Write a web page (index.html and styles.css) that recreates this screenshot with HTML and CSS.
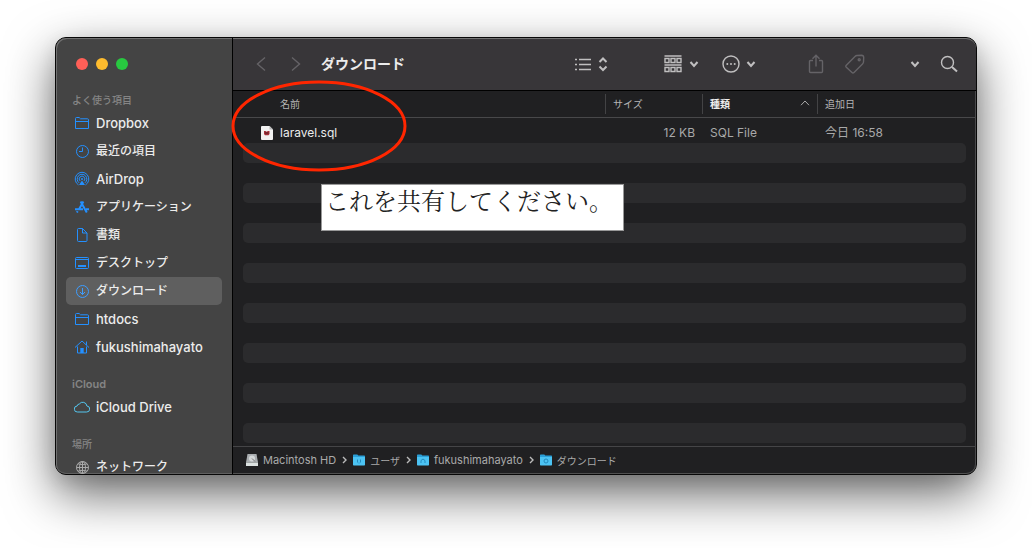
FILE: index.html
```html
<!DOCTYPE html>
<html lang="ja">
<head>
<meta charset="utf-8">
<meta name="viewport" content="width=device-width, initial-scale=1">
<title>ダウンロード</title>
<link rel="stylesheet" href="styles.css">
</head>
<body>
<svg class="sprite" aria-hidden="true">
  <symbol id="folder" viewBox="0 0 16 16"><path d="M1.500 13.500V3.500q0-1 1-1h2.700l1.300 1.300h7q1 0 1 1v8.700zM1.500 6.500h13"/></symbol>
  <symbol id="mini-folder" viewBox="0 0 12 12"><path d="M0 1.200Q0 .5.700.5h3.600l1 1h6q.7 0 .7.7V5H0z" fill="#2a9fd8"/><path d="M0 3h12v7.800q0 .7-.7.7H.7q-.7 0-.7-.7z" fill="#4cc3f3"/></symbol>
  <symbol id="down" viewBox="0 0 10 10"><path d="M1.500 3 5 7l3.500-4"/></symbol>
</svg>
<main class="window">
  <aside class="sidebar">
    <div class="lights">
      <button class="light close" aria-label="閉じる"></button>
      <button class="light minimize" aria-label="しまう"></button>
      <button class="light expand" aria-label="拡大"></button>
    </div>
    <nav class="places">
      <h2 class="group">よく使う項目</h2>
      <a class="place" href="#"><svg class="icon"><use href="#folder"/></svg><span class="latin">Dropbox</span></a>
      <a class="place" href="#"><svg class="icon" viewBox="0 0 16 16"><circle cx="8.500" cy="8.500" r="6"/><path d="M8.500 4.500v4h-3.500"/></svg>最近の項目</a>
      <a class="place" href="#"><svg class="icon" viewBox="0 0 16 16"><path d="M4.500 13.900a6.800 6.800 0 1 1 7 0M5 11.800a4.800 4.800 0 1 1 6 0M6 9.900a2.800 2.800 0 1 1 4 0"/><circle class="solid" cx="8" cy="8" r="1"/><path class="solid" d="m8 9.500 3 4.500H5z"/></svg><span class="latin">AirDrop</span></a>
      <a class="place" href="#"><svg class="icon" viewBox="0 0 16 16"><path class="bold" d="M6.600 2.500 12.800 13.500M9.400 2.500 5 10.300M1 10.300h8M12 10.300h3M3.700 12.200l-.8 1.400"/></svg>アプリケーション</a>
      <a class="place" href="#"><svg class="icon" viewBox="0 0 16 16"><path d="M4.500 1.500h4l4.500 4.500v7.500q0 1-1 1H4.500q-1 0-1-1v-11q0-1 1-1zM8.500 1.500v4.500h4.500"/></svg>書類</a>
      <a class="place" href="#"><svg class="icon" viewBox="0 0 16 16"><rect x="1.500" y="2.500" width="13" height="11" rx="1"/><path d="M1.500 4.500h13"/><path class="bold" d="M4 11h8"/></svg>デスクトップ</a>
      <a class="place selected" href="#" aria-current="page"><svg class="icon" viewBox="0 0 16 16"><circle cx="8.500" cy="8.500" r="6"/><path d="M8.500 5v6.500M6 9l2.500 2.500 2.500-2.500"/></svg>ダウンロード</a>
      <a class="place" href="#"><svg class="icon"><use href="#folder"/></svg><span class="latin">htdocs</span></a>
      <a class="place" href="#"><svg class="icon" viewBox="0 0 16 16"><path d="M1 8.500 8 2l7 6.500M12.500 6V2.500M3.500 7.500v6.500h9V7.500"/><path class="solid" d="M6.300 14V9h3.400v5z"/></svg><span class="latin">fukushimahayato</span></a>
      <h2 class="group later"><span>iCloud</span></h2>
      <a class="place" href="#"><svg class="icon cloud" viewBox="0 0 16 16"><path d="M3.500 13a3 3 0 0 1-.4-6A2.400 2.400 0 0 1 5.300 5a4.200 4.200 0 0 1 7.600 2 3 3 0 0 1-.4 6z"/></svg><span class="latin">iCloud Drive</span></a>
      <h2 class="group later">場所</h2>
      <a class="place" href="#"><svg class="icon globe" viewBox="0 0 16 16"><circle cx="8.500" cy="8.500" r="6"/><ellipse cx="8.500" cy="8.500" rx="3" ry="6"/><path d="M8.500 2.500v12M2.500 8.500h12M4 4.800q4.500 2 9 0M4 12.200q4.500-2 9 0"/></svg>ネットワーク</a>
    </nav>
  </aside>
  <section class="content">
    <header class="toolbar">
      <div class="history">
        <button class="tool dim" aria-label="戻る"><svg width="12" height="16" viewBox="0 0 12 16"><path d="M10 1.500 2.500 8l7.500 6.500"/></svg></button>
        <button class="tool dim" aria-label="進む"><svg width="12" height="16" viewBox="0 0 12 16"><path d="M2 1.500 9.500 8 2 14.500"/></svg></button>
      </div>
      <h1 class="title">ダウンロード</h1>
      <button class="tool view" aria-label="表示"><svg width="18" height="16" viewBox="0 0 18 16"><path d="M5 3.500h12M5 8.500h12M5 13.500h12M1 3.500h2M1 8.500h2M1 13.500h2"/></svg><svg width="10" height="16" viewBox="0 0 10 16"><path class="heavy" d="M1.500 6 5 2.500 8.500 6M1.500 10.500 5 14l3.500-3.500"/></svg></button>
      <button class="tool arrange" aria-label="グループ分け"><svg width="18" height="18" viewBox="0 0 18 18"><path d="M.5 1h17M.5 10h17M1 3.500h4v4H1zM7 3.500h4v4H7zM13 3.500h4v4h-4zM1 12.500h4v4H1zM7 12.500h4v4H7zM13 12.500h4v4h-4z"/></svg><svg class="caret" width="10" height="10"><use href="#down"/></svg></button>
      <button class="tool action" aria-label="操作"><svg width="18" height="18" viewBox="0 0 18 18"><circle cx="9" cy="9" r="8"/><path class="dots" d="M5.300 9h0M9 9h0M12.700 9h0"/></svg><svg class="caret" width="10" height="10"><use href="#down"/></svg></button>
      <button class="tool dim share" aria-label="共有"><svg width="16" height="20" viewBox="0 0 16 20"><path d="M5 6.500H2.500q-1 0-1 1v10q0 1 1 1h11q1 0 1-1v-10q0-1-1-1H11M8 12.500V1.500M4.500 4.800 8 1.300l3.500 3.500"/></svg></button>
      <button class="tool dim tag" aria-label="タグ"><svg width="20" height="20" viewBox="0 0 20 20"><path d="M1.300 11.200 10 2.500q.9-.9 2-1l4.500-.2q2.200 0 2.200 2.200l-.2 4.500q-.1 1.100-1 2L9 18.500q-1 1-2 0l-5.700-5.300q-1-1 0-2z"/><circle cx="14.200" cy="5.800" r="1"/></svg></button>
      <button class="tool more" aria-label="その他"><svg class="caret" width="10" height="10"><use href="#down"/></svg></button>
      <button class="tool search" aria-label="検索"><svg width="18" height="18" viewBox="0 0 18 18"><circle cx="7.500" cy="7.500" r="6"/><path class="heavy" d="m12 12 5 4.500"/></svg></button>
    </header>
    <table class="files">
      <thead>
        <tr><th scope="col" class="name">名前</th><th scope="col">サイズ</th><th scope="col" class="sorted" aria-sort="ascending">種類<svg width="10" height="8" viewBox="0 0 10 8"><path d="M1 6.200 5 2l4 4.200"/></svg></th><th scope="col">追加日</th></tr>
      </thead>
      <tbody>
        <tr><td class="name"><svg width="12" height="14" viewBox="0 0 12 14"><path d="M1 0h7.500L12 3.500V13q0 1-1 1H1q-1 0-1-1V1q0-1 1-1z" fill="#f2f2f2"/><path d="M8.500 0v3.500H12z" fill="#b8b8b8"/><path d="M3 5h1.500l1 .7L7 5h1.500v3L7.500 9.300H4L3 8z" fill="#a3303a"/><path d="M4 7h3.500" stroke="#552026"/></svg>laravel.sql</td><td class="size">12 KB</td><td>SQL File</td><td>今日 16:58</td></tr>
        <tr><td></td></tr><tr><td></td></tr><tr><td></td></tr><tr><td></td></tr><tr><td></td></tr>
        <tr><td></td></tr><tr><td></td></tr><tr><td></td></tr><tr><td></td></tr><tr><td></td></tr>
        <tr><td></td></tr><tr><td></td></tr><tr><td></td></tr><tr><td></td></tr><tr><td></td></tr>
      </tbody>
    </table>
    <footer class="path">
      <a class="crumb latin-crumb" href="#"><svg width="12" height="12" viewBox="0 0 12 12"><path d="M1.500 0h9L12 8.500H0z" fill="#a9adb0"/><circle cx="6" cy="4.500" r="3" fill="#d5d8d9"/><path d="m6 4.500 3 3" stroke="#777"/><path d="M0 8.500h12V12H0z" fill="#dce2e1"/></svg>Macintosh HD</a>
      <svg class="sep" width="5" height="8" viewBox="0 0 5 8"><path d="m1 1 3 3-3 3"/></svg>
      <a class="crumb" href="#"><svg width="12" height="12" viewBox="0 0 12 12"><use href="#mini-folder"/><path class="mark" d="M4.500 5.500v3M7.500 5.500v3M5.500 9h1"/></svg>ユーザ</a>
      <svg class="sep" width="5" height="8" viewBox="0 0 5 8"><path d="m1 1 3 3-3 3"/></svg>
      <a class="crumb latin-crumb" href="#"><svg width="12" height="12" viewBox="0 0 12 12"><use href="#mini-folder"/><path class="mark" d="M4 9V6.500l2-1.500 2 1.500V9"/></svg>fukushimahayato</a>
      <svg class="sep" width="5" height="8" viewBox="0 0 5 8"><path d="m1 1 3 3-3 3"/></svg>
      <a class="crumb" href="#"><svg width="12" height="12" viewBox="0 0 12 12"><use href="#mini-folder"/><circle class="mark" cx="6" cy="7" r="2"/></svg>ダウンロード</a>
    </footer>
    <svg class="ring" viewBox="0 0 176 92" aria-hidden="true"><ellipse cx="88" cy="46" rx="86" ry="44"/></svg>
    <p class="note">これを共有してください。</p>
  </section>
</main>
</body>
</html>
```
FILE: styles.css
```css
* { box-sizing: border-box; }

body {
  margin: 0;
  height: 100vh;
  padding: 37px 55px 73px;
  background: #fff;
  font-family: Inter, "Noto Sans CJK JP", sans-serif;
}

.sprite { position: absolute; width: 0; height: 0; }
svg { flex: none; fill: none; stroke-width: 1; }
a { color: inherit; text-decoration: none; }
h1, h2, p { margin: 0; }

.window {
  display: flex;
  height: 100%;
  border: 1px solid #080808;
  border-radius: 11px;
  background: #202022;
  box-shadow: 0 19px 50px rgba(0, 0, 0, 0.6), 0 6px 18px rgba(0, 0, 0, 0.1);
}

.sidebar {
  flex: none;
  width: 177px;
  padding: 20px 10px 0;
  overflow: hidden;
  border-right: 1px solid #000;
  border-radius: 10px 0 0 10px;
  background: #444;
  box-shadow: inset 1px 1px #707070, inset 0 -1px #606060;
}

.lights { display: flex; gap: 8px; padding: 0 10px; }
.light { width: 12px; height: 12px; padding: 0; border: 0; border-radius: 50%; }
.close { background: #ff5f57; }
.minimize { background: #febc2e; }
.expand { background: #28c840; }

.places { padding-top: 21px; }

.group {
  padding-left: 6px;
  color: #858585;
  font-size: 10px;
  font-weight: 500;
  line-height: 18px;
}
.group.later { padding-top: 14px; }
.group span { font-size: 11px; font-weight: 600; }

.place {
  display: flex;
  align-items: center;
  gap: 6px;
  height: 28px;
  padding-left: 8px;
  border-radius: 5px;
  color: #ececec;
  font-size: 12px;
  font-weight: 500;
  line-height: 16px;
  white-space: nowrap;
}
.latin { font-size: 13px; }
.selected { background: #5f5f5f; }

.icon { width: 16px; height: 16px; stroke: #2490ff; }
.icon .bold { stroke-width: 2; }
.icon .solid { fill: #2490ff; stroke: none; }
.selected .icon { stroke: #3d9dff; }
.icon.cloud { stroke: #55c5ee; }
.icon.globe { stroke: #aaa; }

.content {
  position: relative;
  display: flex;
  flex: 1;
  flex-direction: column;
  min-width: 0;
  border-radius: 0 10px 10px 0;
  box-shadow: inset -1px 0 #49494b;
}

.toolbar {
  display: flex;
  flex: none;
  align-items: center;
  height: 53px;
  padding: 0 18px 2px 22px;
  border-top: 1px solid #737373;
  border-bottom: 1px solid #000;
  border-top-right-radius: 10px;
  background: #383639;
}
.history { display: flex; gap: 23px; }
.title {
  flex: 1;
  margin-left: 19px;
  color: #ececec;
  font-size: 14px;
  font-weight: 700;
  line-height: 20px;
}
.tool {
  display: flex;
  align-items: center;
  padding: 0;
  border: 0;
  background: none;
  stroke: #c0bfc0;
}
.tool svg { stroke-width: 1.4; }
.tool .heavy, .tool .caret { stroke-width: 2; }
.tool .dots { stroke-width: 2; stroke-linecap: round; }
.dim { stroke: #656367; }
.view { gap: 6px; margin-right: 56px; }
.arrange { gap: 7px; margin-right: 23px; }
.action { gap: 6px; margin-right: 52px; }
.share { margin-right: 21px; }
.tag { margin-right: 45px; }
.more { margin-right: 20px; }

.files { display: block; flex: 1; min-height: 0; overflow: hidden; border-spacing: 0; }
.files thead, .files tbody { display: block; }
.files tr { display: grid; grid-template-columns: 1fr 97px 115px 149px; }
.files thead tr {
  align-items: center;
  height: 27px;
  margin-bottom: 5px;
  padding: 0 10px;
  border-bottom: 1px solid #48484a;
}
.files th {
  display: flex;
  align-items: center;
  justify-content: space-between;
  height: 20px;
  padding: 0 7px 2px;
  border-left: 1px solid #434345;
  color: #b5b5b5;
  font-size: 10px;
  font-weight: 400;
}
.files .name { padding-left: 37px; border-left: 0; }
.files .sorted { color: #eee; font-weight: 700; }
.files th svg { stroke: #aaa; }
.files tbody tr { height: 20px; margin: 0 10px; border-radius: 5px; }
.files tbody tr:nth-child(even) { background: #2b2b2d; }
.files td {
  padding: 0 8px;
  color: #a9a9aa;
  font-size: 12px;
  line-height: 20px;
  white-space: nowrap;
}
.files td.name {
  display: flex;
  align-items: center;
  gap: 7px;
  padding-left: 18px;
  color: #ececec;
}
.files td.size { padding-right: 7px; text-align: right; }

.path {
  display: flex;
  flex: none;
  align-items: center;
  gap: 6px;
  height: 28px;
  padding: 0 13px;
  border-top: 1px solid #454547;
  border-bottom: 1px solid #505050;
  border-bottom-right-radius: 10px;
  color: #aaa;
  font-size: 10px;
}
.crumb { display: flex; align-items: center; gap: 5px; white-space: nowrap; }
.latin-crumb { font-size: 11px; }
.sep { stroke: #bbb; stroke-width: 1.4; }
.mark { stroke: #2389bd; }

.ring {
  position: absolute;
  top: 42px;
  left: -2px;
  width: 176px;
  height: 92px;
  stroke: #ff2600;
  stroke-width: 3;
}
.note {
  position: absolute;
  top: 146px;
  left: 88px;
  width: 303px;
  height: 47px;
  padding-left: 3px;
  border: 1px solid #999;
  background: #fff;
  color: #222;
  font-family: "Noto Serif CJK JP", "Noto Sans CJK JP", serif;
  font-size: 24px;
  font-weight: 400;
  line-height: 30px;
  white-space: nowrap;
}
```
